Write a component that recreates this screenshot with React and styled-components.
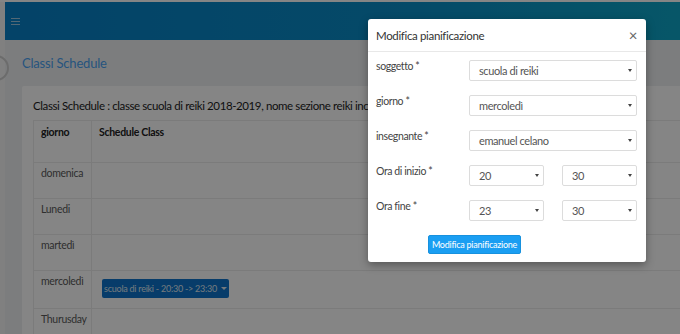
import React from 'react';
import styled, { createGlobalStyle } from 'styled-components';

const GlobalStyle = createGlobalStyle`
  html, body { margin: 0; padding: 0; overflow: hidden; }
  body { font-family: Lato, "Liberation Sans", sans-serif; background: #f0f0f0; }
`;

const days = [
  { name: 'domenica' },
  { name: 'Lunedi' },
  { name: 'martedì' },
  { name: 'mercoledì', slot: 'scuola di reiki - 20:30 -> 23:30' },
  { name: 'Thurusday' },
];

// --- Page (sotto il backdrop) ---
const Screen = styled.div`
  position: relative;
  width: 680px;
  height: 334px;
  overflow: hidden;
  background: #f0f0f0;
`;
const TopStrip = styled.div`
  height: 2px;
  background: #ffffff;
`;
const Layout = styled.div`
  display: grid;
  grid-template-columns: 5px 1fr;
  height: 332px;
`;
const SideRail = styled.div`
  background: #f6f6f6;
`;
const Main = styled.div`
  display: flex;
  flex-direction: column;
  min-width: 0;
`;
const Navbar = styled.div`
  height: 38px;
  flex-shrink: 0;
  display: flex;
  align-items: center;
  padding-left: 6px;
  background: linear-gradient(90deg, #0880c8 0%, #0a8ec8 60%, #0ea6c8 100%);
`;
const Burger = styled.div`
  display: flex;
  flex-direction: column;
  gap: 2px;
  width: 9px;
  span { height: 1px; background: #9fc8e0; display: block; }
`;
const Content = styled.div`
  padding: 15px 0 0 17px;
  background: #eef0f2;
  flex: 1;
`;
const PageTitle = styled.h3`
  margin: 0 0 15px;
  font-size: 13px;
  letter-spacing: -0.2px;
  font-weight: 400;
  color: #4aa2f2;
  line-height: 16px;
`;
const Card = styled.div`
  background: #ffffff;
  border-radius: 2px;
  padding: 12px 0 0 11px;
  height: 260px;
  margin-right: -20px;
`;
const CardTitle = styled.div`
  font-size: 11.5px;
  letter-spacing: -0.4px;
  color: #1c1c1c;
  white-space: nowrap;
  line-height: 16px;
  margin-bottom: 6px;
`;
const Table = styled.table`
  border-collapse: collapse;
  table-layout: fixed;
  width: 700px;
  font-size: 10.5px;
  letter-spacing: -0.3px;
  td, th {
    border: 1px solid #ececec;
    text-align: left;
    vertical-align: top;
    padding: 4px 0 0 7px;
  }
  th {
    height: 36px;
    padding-top: 5px;
    font-weight: 700;
    color: #222;
  }
`;
const DayHead = styled.th`
  width: 50px;
`;
const DayCell = styled.td`
  height: ${p => (p.$tall ? 33 : 31)}px;
  color: #5a5a5a;
  white-space: nowrap;
`;
const SlotCell = styled.td`
  padding: ${p => (p.$slot ? '8px 0 0 10px' : '4px 0 0 7px')} !important;
`;
const SlotButton = styled.button`
  border: none;
  border-radius: 2px;
  background: #0e74cc;
  color: #dfe8f0;
  font-family: inherit;
  font-size: 9px;
  letter-spacing: -0.25px;
  height: 19px;
  width: 127px;
  padding: 0;
  white-space: nowrap;
  display: inline-flex;
  align-items: center;
  justify-content: center;
  gap: 4px;
`;
const Caret = styled.span`
  width: 0;
  height: 0;
  border-left: 3px solid transparent;
  border-right: 3px solid transparent;
  border-top: 3px solid #dfe8f0;
`;
const Ring = styled.div`
  position: absolute;
  left: -17px;
  top: 55px;
  width: 22px;
  height: 22px;
  border-radius: 50%;
  border: 2px solid #cfcfcf;
`;

// --- Modal ---
const Backdrop = styled.div`
  position: absolute;
  inset: 0;
  background: rgba(0, 0, 0, 0.48);
`;
const Modal = styled.div`
  position: absolute;
  left: 368px;
  top: 19px;
  width: 278px;
  height: 243px;
  background: #fff;
  border-radius: 3px;
  box-shadow: 0 3px 9px rgba(0, 0, 0, 0.35);
  display: flex;
  flex-direction: column;
`;
const ModalHeader = styled.div`
  height: 32px;
  flex-shrink: 0;
  border-bottom: 1px solid #e8e8e8;
  display: flex;
  align-items: center;
  justify-content: space-between;
  padding: 0 9px 0 8px;
  font-size: 11.5px;
  letter-spacing: -0.35px;
  color: #333;
`;
const Close = styled.span`
  font-size: 15px;
  color: #666;
  line-height: 1;
`;
const ModalBody = styled.div`
  padding: 8px 9px 0 8px;
  display: flex;
  flex-direction: column;
  gap: 14px;
`;
const FormRow = styled.div`
  display: grid;
  grid-template-columns: 93px 1fr;
  align-items: start;
`;
const Label = styled.label`
  font-size: 10.5px;
  letter-spacing: -0.4px;
  color: #444;
  white-space: nowrap;
`;
const Selects = styled.div`
  display: grid;
  grid-template-columns: ${p => (p.$split ? '75px 75px' : '1fr')};
  justify-content: space-between;
`;
const Select = styled.div`
  box-sizing: border-box;
  height: 21px;
  border: 1px solid #dcdcdc;
  border-radius: 2px;
  display: flex;
  align-items: center;
  justify-content: space-between;
  padding: 0 4px 0 9px;
  font-size: 11px;
  letter-spacing: -0.4px;
  color: #555;
`;
const SelectArrow = styled.span`
  width: 0;
  height: 0;
  border-left: 2px solid transparent;
  border-right: 2px solid transparent;
  border-top: 3px solid #444;
`;
const Footer = styled.div`
  display: flex;
  padding-left: 52px;
`;
const PrimaryButton = styled.button`
  background: #1a9ef2;
  border: 1px solid #1791de;
  border-radius: 2px;
  color: #fff;
  font-family: inherit;
  font-size: 9px;
  letter-spacing: -0.25px;
  height: 19px;
  width: 93px;
  padding: 0;
  white-space: nowrap;
`;

const SelectBox = ({ value }) => (
  <Select>
    <span>{value}</span>
    <SelectArrow />
  </Select>
);

const fields = [
  { label: 'soggetto *', values: ['scuola di reiki'] },
  { label: 'giorno *', values: ['mercoledì'] },
  { label: 'insegnante *', values: ['emanuel celano'] },
  { label: 'Ora di inizio *', values: ['20', '30'] },
  { label: 'Ora fine *', values: ['23', '30'] },
];

export default function App() {
  return (
    <Screen>
      <GlobalStyle />
      <TopStrip />
      <Layout>
        <SideRail />
        <Main>
          <Navbar>
            <Burger><span /><span /><span /></Burger>
          </Navbar>
          <Content>
            <PageTitle>Classi Schedule</PageTitle>
            <Card>
              <CardTitle>
                Classi Schedule : classe scuola di reiki 2018-2019, nome sezione reiki incontri
              </CardTitle>
              <Table>
                <thead>
                  <tr>
                    <DayHead>giorno</DayHead>
                    <th>Schedule Class</th>
                  </tr>
                </thead>
                <tbody>
                  {days.map(d => (
                    <tr key={d.name}>
                      <DayCell $tall={!!d.slot}>{d.name}</DayCell>
                      <SlotCell $slot={!!d.slot}>
                        {d.slot && (
                          <SlotButton>
                            {d.slot} <Caret />
                          </SlotButton>
                        )}
                      </SlotCell>
                    </tr>
                  ))}
                </tbody>
              </Table>
            </Card>
          </Content>
        </Main>
      </Layout>
      <Ring />
      <Backdrop />
      <Modal>
        <ModalHeader>
          <span>Modifica pianificazione</span>
          <Close>×</Close>
        </ModalHeader>
        <ModalBody>
          {fields.map(f => (
            <FormRow key={f.label}>
              <Label>{f.label}</Label>
              <Selects $split={f.values.length > 1}>
                {f.values.map((v, i) => (
                  <SelectBox key={i} value={v} />
                ))}
              </Selects>
            </FormRow>
          ))}
          <Footer>
            <PrimaryButton>Modifica pianificazione</PrimaryButton>
          </Footer>
        </ModalBody>
      </Modal>
    </Screen>
  );
}
